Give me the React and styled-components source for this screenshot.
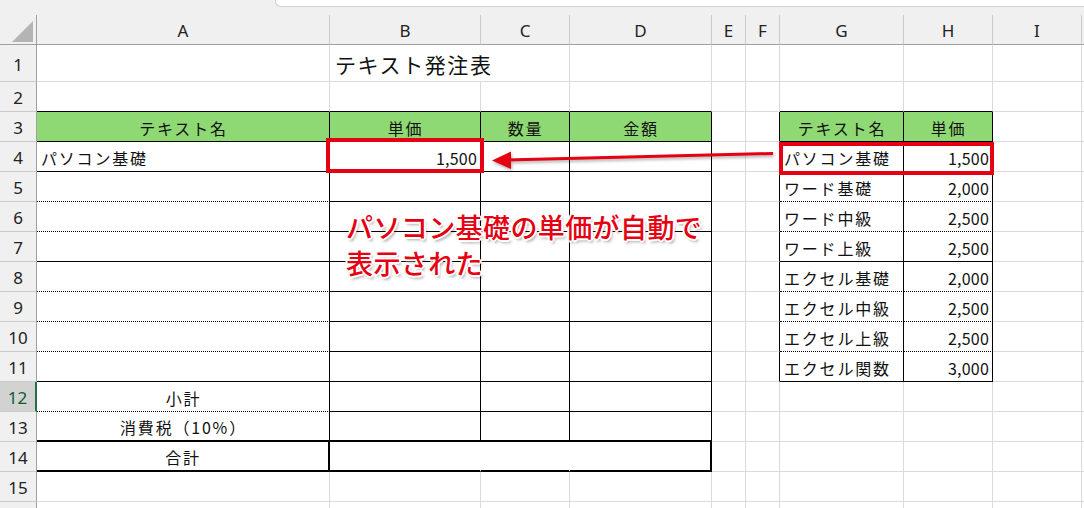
import React from 'react'
import styled, { createGlobalStyle, css } from 'styled-components'

const GlobalStyle = createGlobalStyle`
  html, body {
    margin: 0;
    padding: 0;
    background: #fff;
    overflow: hidden;
  }
  body {
    font-family: "Noto Sans CJK JP", "Noto Sans", sans-serif;
  }
`

// only the letters that fit in the window get a label
const COLS = ['A', 'B', 'C', 'D', 'E', 'F', 'G', 'H', 'I', '']
const WIDTHS = [37, 293, 151, 89, 142, 34, 34, 124, 89, 89, 120]
const ROWS = 16
const LABELLED_ROWS = 15

const LINES = {
  grid: '1px solid #dadada',
  thin: '1px solid #000',
  dot: '1px dotted #000',
  thick: '2px solid #000',
  none: '1px solid transparent',
}

const RED = '#e50012'
const GREEN = '#8ed973'

const Sheet = styled.div`
  position: relative;
  width: 1084px;
  height: 508px;
  overflow: hidden;
  background: #f0f0f0;
`

const TopStrip = styled.div`
  height: 15px;
  display: flex;
  background: #f0f0f0;
`

const FormulaEdge = styled.div`
  margin-left: 275px;
  flex: 1;
  height: 6px;
  background: #fff;
  border-left: 1px solid #d2d2d2;
  border-bottom: 1px solid #d2d2d2;
  border-bottom-left-radius: 6px;
`

const Grid = styled.div`
  display: grid;
  grid-template-columns: ${WIDTHS.map((w) => w + 'px').join(' ')};
  grid-template-rows: 30px 37px repeat(${ROWS - 1}, 30px);
  background: #fff;
  box-sizing: border-box;
  * {
    box-sizing: border-box;
  }
`

const Corner = styled.div`
  position: relative;
  background: #f0f0f0;
  border-right: 1px solid #a0a0a0;
  border-bottom: 1px solid #a0a0a0;
  &::after {
    content: '';
    position: absolute;
    right: 3px;
    bottom: 2px;
    width: 0;
    height: 0;
    border-left: 21px solid transparent;
    border-bottom: 21px solid #b4b4b4;
  }
`

const ColHead = styled.div`
  background: #f0f0f0;
  border-right: 1px solid #cacaca;
  border-bottom: 1px solid #a0a0a0;
  display: flex;
  align-items: center;
  justify-content: center;
  font-family: "Noto Sans", "Liberation Sans", sans-serif;
  font-size: 17px;
  color: #222;
  padding-top: 1px;
`

const RowHead = styled.div`
  background: #f0f0f0;
  border-right: 1px solid #a0a0a0;
  border-bottom: 1px solid #cacaca;
  display: flex;
  align-items: center;
  justify-content: center;
  font-family: "Noto Sans", "Liberation Sans", sans-serif;
  font-size: 17px;
  color: #222;
  padding-top: 2px;
  ${(p) =>
    p.$active &&
    css`
      background: #d2d2d2;
      border-right: 2px solid #217346;
      color: #0f5c32;
    `}
`

const Cell = styled.div`
  display: flex;
  align-items: center;
  justify-content: ${(p) => p.$align || 'flex-start'};
  padding: 2px 3px 0 4px;
  background: ${(p) => (p.$fill ? GREEN : 'transparent')};
  border-right: ${(p) => LINES[p.$right]};
  border-bottom: ${(p) => LINES[p.$bottom]};
  font-size: 16px;
  letter-spacing: ${(p) => (p.$num ? '0.2px' : '1.8px')};
  color: #111;
  white-space: nowrap;
  ${(p) =>
    p.$title &&
    css`
      font-size: 21px;
      letter-spacing: 1.6px;
      overflow: visible;
      z-index: 1;
      padding-left: 5px;
    `}
`

const Overlay = styled.div`
  position: absolute;
  inset: 0;
  pointer-events: none;
`

const Highlight = styled.div`
  position: absolute;
  left: ${(p) => p.$x}px;
  top: ${(p) => p.$y}px;
  width: ${(p) => p.$w}px;
  height: ${(p) => p.$h}px;
  border: 4px solid ${RED};
  box-sizing: border-box;
`

const Callout = styled.div`
  position: absolute;
  left: 346px;
  top: 209px;
  font-size: 27px;
  line-height: 36px;
  letter-spacing: 0.4px;
  font-weight: 500;
  color: ${RED};
  white-space: nowrap;
  text-shadow:
    -1px -1px 0 #fff, 1px -1px 0 #fff, -1px 1px 0 #fff, 1px 1px 0 #fff,
    0 -2px 0 #fff, 0 2px 0 #fff, -2px 0 0 #fff, 2px 0 0 #fff,
    2px 3px 3px rgba(0, 0, 0, 0.35);
`

const ArrowLayer = styled.svg`
  position: absolute;
  left: 0;
  top: 0;
  filter: drop-shadow(1px 2px 1.5px rgba(0, 0, 0, 0.3));
`

const A_BOTTOM = { 5: 'dot', 6: 'dot', 7: 'thin', 8: 'dot', 9: 'dot', 10: 'dot', 11: 'thin', 12: 'dot' }
const LIST_BOTTOM = { 5: 'dot', 6: 'dot', 7: 'thin', 8: 'dot', 9: 'dot', 10: 'dot', 11: 'thin' }

const PRICES = [
  ['パソコン基礎', '1,500'],
  ['ワード基礎', '2,000'],
  ['ワード中級', '2,500'],
  ['ワード上級', '2,500'],
  ['エクセル基礎', '2,000'],
  ['エクセル中級', '2,500'],
  ['エクセル上級', '2,500'],
  ['エクセル関数', '3,000'],
]

const bottomOf = (r, c) => {
  if (c >= 1 && c <= 4) {
    if (r >= 2 && r <= 4) return 'thin'
    if (r >= 5 && r <= 12) return c === 1 ? A_BOTTOM[r] : 'thin'
    if (r === 13 || r === 14) return 'thick'
  }
  if (c === 7 || c === 8) {
    if (r >= 2 && r <= 4) return 'thin'
    if (r >= 5 && r <= 11) return LIST_BOTTOM[r]
  }
  return 'grid'
}

const rightOf = (r, c) => {
  if (r === 1 && c === 2) return 'none'
  if (c >= 1 && c <= 4) {
    if (r >= 3 && r <= 13) return 'thin'
    if (r === 14) return c === 1 || c === 4 ? 'thick' : 'none'
  }
  if (c >= 6 && c <= 8 && r >= 3 && r <= 11) return 'thin'
  return 'grid'
}

const contentOf = (r, c) => {
  if (r === 1 && c === 2) return { text: 'テキスト発注表', title: true }
  if (r === 3) {
    const heads = { 1: 'テキスト名', 2: '単価', 3: '数量', 4: '金額', 7: 'テキスト名', 8: '単価' }
    if (heads[c]) return { text: heads[c], align: 'center', fill: true }
  }
  if (r === 4 && c === 1) return { text: 'パソコン基礎' }
  if (r === 4 && c === 2) return { text: '1,500', align: 'flex-end', num: true }
  if (c === 1 && r === 12) return { text: '小計', align: 'center' }
  if (c === 1 && r === 13) return { text: '消費税（10%）', align: 'center' }
  if (c === 1 && r === 14) return { text: '合計', align: 'center' }
  if (r >= 4 && r <= 11 && (c === 7 || c === 8)) {
    const item = PRICES[r - 4]
    return c === 7 ? { text: item[0] } : { text: item[1], align: 'flex-end', num: true }
  }
  return {}
}

const App = () => {
  const rows = []
  for (let r = 1; r <= ROWS; r++) {
    rows.push(
      <RowHead key={'h' + r} $active={r === 12}>
        {r <= LABELLED_ROWS ? r : ''}
      </RowHead>
    )
    for (let c = 1; c <= COLS.length; c++) {
      const info = contentOf(r, c)
      rows.push(
        <Cell
          key={r + '-' + c}
          $right={rightOf(r, c)}
          $bottom={bottomOf(r, c)}
          $align={info.align}
          $fill={info.fill}
          $num={info.num}
          $title={info.title}
        >
          {info.text}
        </Cell>
      )
    }
  }

  return (
    <>
      <GlobalStyle />
      <Sheet>
        <TopStrip>
          <FormulaEdge />
        </TopStrip>
        <Grid>
          <Corner />
          {COLS.map((col, i) => (
            <ColHead key={i}>{col}</ColHead>
          ))}
          {rows}
        </Grid>

        <Overlay>
          <Highlight $x={326} $y={138} $w={158} $h={35} />
          <Highlight $x={779} $y={142} $w={215} $h={33} />
          <ArrowLayer width="1084" height="508" viewBox="0 0 1084 508">
            <line x1="773" y1="153.5" x2="506" y2="160" stroke={RED} strokeWidth="3" />
            <polygon points="492,160.5 511,151.5 511,169" fill={RED} />
          </ArrowLayer>
          <Callout>
            パソコン基礎の単価が自動で
            <br />
            表示された
          </Callout>
        </Overlay>
      </Sheet>
    </>
  )
}

export default App
